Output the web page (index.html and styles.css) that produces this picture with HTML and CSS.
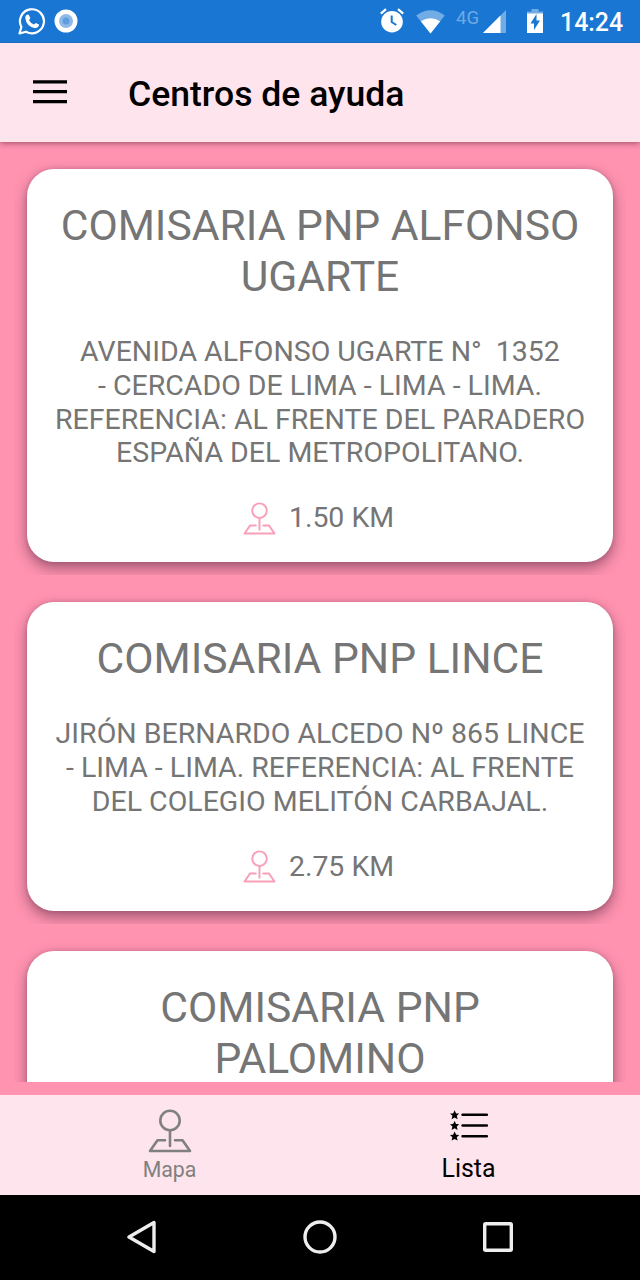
FILE: index.html
```html
<!DOCTYPE html>
<html lang="es">
<head>
<meta charset="utf-8">
<title>Centros de ayuda</title>
<link rel="stylesheet" href="styles.css">
</head>
<body>
<svg class="defs" width="0" height="0" aria-hidden="true">
  <symbol id="place" viewBox="0 0 44 44">
    <g fill="none" stroke="currentColor" stroke-width="2.6" stroke-linecap="round" stroke-linejoin="round">
      <circle cx="22" cy="11.5" r="9.7"/>
      <path d="M22 21.5V37M17 31.2H9.5L2 42H42L34.5 31.2H27"/>
    </g>
  </symbol>
</svg>
<div class="screen">
  <div class="status">
    <div class="status-group">
      <svg width="28" height="28" viewBox="0 0 28 28">
        <path d="M1.5 26.5L3.4 20A12 12 0 1 1 8 24.7Z" fill="none" stroke="#fff" stroke-width="2.2" stroke-linejoin="round"/>
        <path d="M8 8.6Q10 6.8 11 8.2L12.3 11Q12.2 12 11 13.2Q13 16.5 16 17.6L17.8 16L21 17.6Q21 21 17 21.2Q8.300 19.500 7.300 11Q7.200 9.500 8 8.600Z" fill="#fff"/>
      </svg>
      <svg width="24" height="24" viewBox="0 0 24 24">
        <circle cx="12" cy="12" r="11.5" fill="#fff"/><circle cx="12" cy="12" r="7" fill="#8fb9e8"/><circle cx="12" cy="12" r="3.500" fill="#5f9ddf"/>
      </svg>
    </div>
    <div class="status-group status-right">
      <svg class="alarm" width="24" height="25" viewBox="0 0 24 25">
        <circle cx="12" cy="13.700" r="10.800" fill="#fff"/>
        <path d="M.8 5.600L6 1.200M23.200 5.600L18 1.200" stroke="#fff" stroke-width="2.300"/>
        <path d="M11.700 7.500V14L16.300 17" fill="none" stroke="#1976d2" stroke-width="2"/>
      </svg>
      <svg class="wifi" width="29" height="24" viewBox="0 0 29 24">
        <path d="M.2 5.500Q14.500-5 28.800 5.500L14.500 23.500Z" fill="#72ace5"/>
        <path d="M4.800 11.300Q14.500 5 24.200 11.300L14.500 23.500Z" fill="#fff"/>
      </svg>
      <span class="net">4G</span>
      <svg class="signal" width="23" height="23" viewBox="0 0 23 23">
        <path d="M0 23L23 0V23Z" fill="#72ace5"/><path d="M0 23L17.500 5.500V23Z" fill="#fff"/>
      </svg>
      <svg class="battery" width="16" height="24" viewBox="0 0 16 24">
        <path d="M0 2.500H4.500V0H11.500V2.500H16V5H0Z" fill="#72ace5"/><path d="M0 4.500H16V24H0Z" fill="#fff"/>
        <path d="M9.500 5L3.500 14.500H7V21L13 11.500H9.500Z" fill="#1976d2"/>
      </svg>
      <span class="time">14:24</span>
    </div>
  </div>
  <header class="appbar">
    <svg width="34" height="24" viewBox="0 0 34 24"><path d="M0 1.800H34M0 11.700H34M0 21.700H34" stroke="#000" stroke-width="3.200"/></svg>
    <h1>Centros de ayuda</h1>
  </header>
  <main class="list">
    <section class="item"><article class="card">
      <h2>COMISARIA PNP ALFONSO<br>UGARTE</h2>
      <p class="address">AVENIDA ALFONSO UGARTE N°&nbsp; 1352<br>- CERCADO DE LIMA - LIMA - LIMA.<br>REFERENCIA: AL FRENTE DEL PARADERO<br>ESPAÑA DEL METROPOLITANO.</p>
      <div class="distance"><svg width="33" height="33"><use href="#place"/></svg><span>1.50 KM</span></div>
    </article></section>
    <section class="item"><article class="card">
      <h2>COMISARIA PNP LINCE</h2>
      <p class="address">JIRÓN BERNARDO ALCEDO Nº 865 LINCE<br>- LIMA - LIMA. REFERENCIA: AL FRENTE<br>DEL COLEGIO MELITÓN CARBAJAL.</p>
      <div class="distance"><svg width="33" height="33"><use href="#place"/></svg><span>2.75 KM</span></div>
    </article></section>
    <section class="item"><article class="card cut">
      <h2>COMISARIA PNP<br>PALOMINO</h2>
    </article></section>
  </main>
  <nav class="tabs">
    <div class="tab">
      <svg width="44" height="44"><use href="#place"/></svg>
      <span>Mapa</span>
    </div>
    <div class="tab active">
      <svg width="38" height="32" viewBox="0 0 38 32">
        <defs><path id="star" d="M0-4.800L1.500-1.600L4.600-1.500L2.200 .8L3 4.200L0 2.500L-3 4.200L-2.200 .8L-4.600-1.500L-1.500-1.600Z"/></defs>
        <use href="#star" x="4.600" y="5"/><use href="#star" x="4.600" y="15.700"/><use href="#star" x="4.600" y="26.400"/>
        <path d="M12.500 4.800H37M12.500 15.500H37M12.500 26.200H37" stroke="#000" stroke-width="2.400" stroke-linecap="round"/>
      </svg>
      <span>Lista</span>
    </div>
  </nav>
  <footer class="sysnav">
    <svg width="30" height="34" viewBox="0 0 30 34"><path d="M27 2.500V31.500L2 17Z"/></svg>
    <svg width="34" height="34" viewBox="0 0 34 34"><circle cx="17" cy="17" r="15"/></svg>
    <svg width="30" height="34" viewBox="0 0 30 34"><rect x="1.700" y="3.700" width="26.600" height="26.600" rx="1"/></svg>
  </footer>
</div>
</body>
</html>
```

FILE: styles.css
```css
* { box-sizing: border-box; }
body { margin: 0; font-family: Roboto, "Liberation Sans", sans-serif; color: #757575; }
h1, h2, p { margin: 0; font-weight: 400; }
svg { display: block; flex: none; }
.defs { position: absolute; }
.screen { display: flex; flex-direction: column; width: 640px; height: 1280px; overflow: hidden; background: #ff93b0; }

.status { flex: none; display: flex; justify-content: space-between; height: 42.500px; padding: 0 16px 0 18px; background: #1976d2; color: #fff; }
.status-group { display: flex; align-items: center; gap: 8px; }
.status-right { align-items: flex-start; gap: 0; }
.alarm { margin-top: 8px; }
.wifi { margin: 10px 0 0 12px; }
.net { width: 27px; margin: 8px 0 0 11px; font-size: 18.500px; line-height: 20px; color: #6fa9e4; }
.signal { margin-top: 10px; }
.battery { margin: 9px 0 0 21px; }
.time { width: 64px; margin: 8px 0 0 17px; font-size: 24.900px; font-weight: 500; line-height: 30px; white-space: nowrap; }

.appbar { position: relative; flex: none; display: flex; align-items: center; gap: 61px; height: 99.500px; padding-left: 33px; background: #fee4ec; box-shadow: 0 1px 6px rgba(70, 20, 40, .55); clip-path: inset(0 0 -12px 0); }
.appbar h1 { margin-top: 4px; color: #000; font-size: 35.560px; font-weight: 500; line-height: 42px; }

.list { flex: none; height: 940px; padding: 14px 14px 0; display: flex; flex-direction: column; gap: 14px; overflow: hidden; }
.item { flex: none; padding: 13px; overflow: hidden; }
.card { padding: 31px 0 26px; border-radius: 27px; background: #fff; box-shadow: 0 6px 14px rgba(70, 30, 55, .5), 0 0 4px rgba(70, 30, 55, .2); text-align: center; white-space: nowrap; }
.card h2 { font-size: 42.600px; line-height: 51px; }
.address { margin-top: 33px; font-size: 28.520px; line-height: 33.800px; }
.distance { display: flex; align-items: center; justify-content: center; gap: 13px; margin-top: 30px; padding-right: 3px; font-size: 28.440px; line-height: 36px; }
.distance svg { color: #f9a0b9; }
.cut { height: 180px; }

.tabs { flex: none; display: grid; grid-template-columns: 1fr 1fr; height: 100px; margin-top: 12.500px; padding: 0 22px 0 20px; background: #fee4ec; }
.tab { display: flex; flex-direction: column; align-items: center; padding-top: 14px; color: #808080; font-size: 21.300px; line-height: 30px; }
.tab span { margin-top: 2px; }
.tab.active { padding-top: 15px; color: #000; font-size: 24.900px; }
.tab.active span { margin-top: 12px; }

.sysnav { flex: 1; display: flex; justify-content: space-between; align-items: center; padding: 0 127px 0 127px; background: #000; }
.sysnav svg { fill: none; stroke: #eee; stroke-width: 3.400px; stroke-linejoin: round; }
```
